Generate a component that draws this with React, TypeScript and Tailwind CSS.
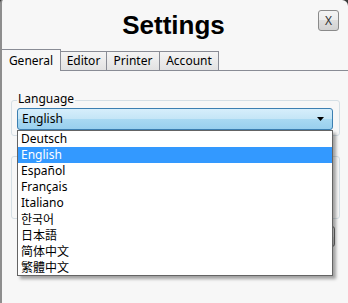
import { useState } from 'react';

const languages = [
  { name: 'Deutsch', font: '' },
  { name: 'English', font: '' },
  { name: 'Español', font: '' },
  { name: 'Français', font: '' },
  { name: 'Italiano', font: '' },
  { name: '한국어', font: "font-['Noto_Sans_CJK_KR',sans-serif]" },
  { name: '日本語', font: "font-['Noto_Sans_CJK_JP',sans-serif]" },
  { name: '简体中文', font: "font-['Noto_Sans_CJK_SC',sans-serif]" },
  { name: '繁體中文', font: "font-['Noto_Sans_CJK_TC',sans-serif]" },
];

const tabs = [
  { name: 'Editor', width: 'w-[46px]' },
  { name: 'Printer', width: 'w-[53px]' },
  { name: 'Account', width: 'w-[59px]' },
];

export default function App() {
  const [language, setLanguage] = useState('English');

  return (
    <div className="w-[348px] h-[303px] overflow-hidden bg-[#3a3a3a] text-black text-[12px] font-['Noto_Sans',sans-serif]">
      <div className="h-full rounded-tl-[3px] rounded-tr-[6px] border-l-2 border-[#8e8e8e] bg-[#f7f7f7]">
        {/* title bar */}
        <div className="grid grid-cols-[1fr_auto_1fr] h-[49px] pr-[3px]">
          <div />
          <h1 className="pt-[10px] leading-[30px] text-[26px] font-bold font-['Liberation_Sans',Arial,sans-serif]">
            Settings
          </h1>
          <button className="justify-self-end mt-[10px] mr-[6px] w-[21px] h-[21px] rounded-[3px] border border-[#8a8a8a] bg-[linear-gradient(#f4f4f4_0%,#ececec_50%,#dedede_50%,#d2d2d2_100%)] text-[12px] leading-[19px] text-[#333]">
            X
          </button>
        </div>

        {/* tabs */}
        <div className="flex items-end">
          <div className="relative z-10 h-[22px] -mb-px w-[59px] border-t border-r border-[#898c95] bg-[#f7f7f7] pt-[2px] text-center leading-[18px]">
            General
          </div>
          {tabs.map((t) => (
            <div
              key={t.name}
              className={`${t.width} h-[19px] border-t border-r border-[#898c95] bg-[linear-gradient(#f4f4f4,#e2e2e2)] text-center leading-[18px]`}
            >
              {t.name}
            </div>
          ))}
        </div>

        {/* tab page */}
        <div className="border-t border-[#898c95] pt-[21px]">
          <fieldset className="ml-[9px] w-[329px] rounded-[3px] border border-[#d5dfe5] pl-[5px] pr-[6px] pb-[5px]">
            <legend className="ml-0 px-[1px] pb-[3px] leading-[14px]">Language</legend>
            <div className="relative -mt-px">
              <div className="flex h-[22px] items-center rounded-[3px] border border-[#3c7fb1] bg-[linear-gradient(#d6eefb_0%,#c4e5f6_50%,#a9d9f2_50%,#98cfee_100%)] pl-[4px] pr-[6px] leading-[20px]">
                <span className="flex-1">{language}</span>
                <svg width="7" height="4" viewBox="0 0 7 4" className="mr-[2px]">
                  <path d="M0 0h7L3.5 4z" fill="#000" />
                </svg>
              </div>

              {/* open list */}
              <ul className="absolute left-0 top-full z-20 w-full border border-[#646464] bg-white shadow-[3px_3px_3px_rgba(0,0,0,0.35)]">
                {languages.map((l) => (
                  <li
                    key={l.name}
                    onClick={() => setLanguage(l.name)}
                    className={`h-[16px] pl-[3px] leading-[16px] ${l.font} ${
                      l.name === language ? 'bg-[#3399ff] text-white' : ''
                    }`}
                  >
                    {l.name}
                  </li>
                ))}
              </ul>
            </div>
          </fieldset>

          {/* second group, covered by the open list */}
          <fieldset className="mt-[20px] ml-[9px] w-[329px] rounded-[3px] border border-[#d5dfe5] pl-[5px] pr-[6px] pb-[5px]">
            <div className="h-[56px]" />
          </fieldset>

          <div className="mt-[7px] mr-[13px] flex justify-end">
            <button
              aria-label="Apply"
              className="h-[21px] w-[75px] rounded-[3px] border border-[#707070] bg-[linear-gradient(#f2f2f2_0%,#ebebeb_50%,#dddddd_50%,#cfcfcf_100%)]"
            />
          </div>
        </div>
      </div>
    </div>
  );
}
